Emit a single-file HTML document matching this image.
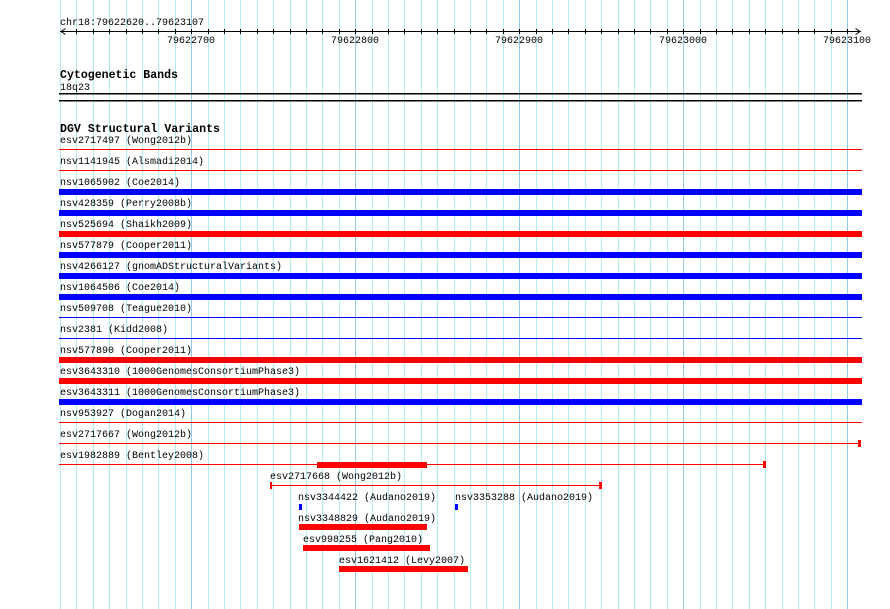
<!DOCTYPE html>
<html><head><meta charset="utf-8"><style>
html,body{margin:0;padding:0;background:#fff;width:890px;height:609px;overflow:hidden}
svg{display:block}
text{font-family:"Liberation Mono",monospace;font-size:10px;fill:#000}
.b{font-weight:bold;font-size:11.5px}
</style></head><body>
<svg width="890" height="609" viewBox="0 0 890 609" shape-rendering="crispEdges">
<g stroke="#b2eef0" stroke-width="1">
<line x1="60.5" y1="0" x2="60.5" y2="609"/><line x1="76.5" y1="0" x2="76.5" y2="609"/><line x1="93.5" y1="0" x2="93.5" y2="609"/><line x1="109.5" y1="0" x2="109.5" y2="609"/><line x1="126.5" y1="0" x2="126.5" y2="609"/><line x1="142.5" y1="0" x2="142.5" y2="609"/><line x1="158.5" y1="0" x2="158.5" y2="609"/><line x1="175.5" y1="0" x2="175.5" y2="609"/>
<line x1="208.5" y1="0" x2="208.5" y2="609"/><line x1="224.5" y1="0" x2="224.5" y2="609"/><line x1="240.5" y1="0" x2="240.5" y2="609"/><line x1="257.5" y1="0" x2="257.5" y2="609"/><line x1="273.5" y1="0" x2="273.5" y2="609"/><line x1="290.5" y1="0" x2="290.5" y2="609"/><line x1="306.5" y1="0" x2="306.5" y2="609"/><line x1="322.5" y1="0" x2="322.5" y2="609"/><line x1="339.5" y1="0" x2="339.5" y2="609"/>
<line x1="372.5" y1="0" x2="372.5" y2="609"/><line x1="388.5" y1="0" x2="388.5" y2="609"/><line x1="404.5" y1="0" x2="404.5" y2="609"/><line x1="421.5" y1="0" x2="421.5" y2="609"/><line x1="437.5" y1="0" x2="437.5" y2="609"/><line x1="454.5" y1="0" x2="454.5" y2="609"/><line x1="470.5" y1="0" x2="470.5" y2="609"/><line x1="486.5" y1="0" x2="486.5" y2="609"/><line x1="503.5" y1="0" x2="503.5" y2="609"/>
<line x1="536.5" y1="0" x2="536.5" y2="609"/><line x1="552.5" y1="0" x2="552.5" y2="609"/><line x1="568.5" y1="0" x2="568.5" y2="609"/><line x1="585.5" y1="0" x2="585.5" y2="609"/><line x1="601.5" y1="0" x2="601.5" y2="609"/><line x1="618.5" y1="0" x2="618.5" y2="609"/><line x1="634.5" y1="0" x2="634.5" y2="609"/><line x1="650.5" y1="0" x2="650.5" y2="609"/><line x1="667.5" y1="0" x2="667.5" y2="609"/>
<line x1="700.5" y1="0" x2="700.5" y2="609"/><line x1="716.5" y1="0" x2="716.5" y2="609"/><line x1="732.5" y1="0" x2="732.5" y2="609"/><line x1="749.5" y1="0" x2="749.5" y2="609"/><line x1="765.5" y1="0" x2="765.5" y2="609"/><line x1="782.5" y1="0" x2="782.5" y2="609"/><line x1="798.5" y1="0" x2="798.5" y2="609"/><line x1="814.5" y1="0" x2="814.5" y2="609"/><line x1="831.5" y1="0" x2="831.5" y2="609"/>
</g>
<g stroke="#92c8e8" stroke-width="1">
<line x1="191.5" y1="0" x2="191.5" y2="609"/><line x1="355.5" y1="0" x2="355.5" y2="609"/><line x1="519.5" y1="0" x2="519.5" y2="609"/><line x1="683.5" y1="0" x2="683.5" y2="609"/><line x1="847.5" y1="0" x2="847.5" y2="609"/>
</g>
<!-- ruler -->
<text x="60" y="25">chr18:79622620..79623107</text>
<g stroke="#000" stroke-width="1">
<line x1="60" y1="31.5" x2="861" y2="31.5"/>
<path d="M65.5 28.5 L61 31.5 L65.5 34.5 M855.5 28.5 L860 31.5 L855.5 34.5" fill="none" shape-rendering="auto"/>
<path d="M76.5 29v5M93.5 29v5M109.5 29v5M126.5 29v5M142.5 29v5M158.5 29v5M175.5 29v5M191.5 29v5M208.5 29v5M224.5 29v5M240.5 29v5M257.5 29v5M273.5 29v5M290.5 29v5M306.5 29v5M322.5 29v5M339.5 29v5M355.5 29v5M372.5 29v5M388.5 29v5M404.5 29v5M421.5 29v5M437.5 29v5M454.5 29v5M470.5 29v5M486.5 29v5M503.5 29v5M519.5 29v5M536.5 29v5M552.5 29v5M568.5 29v5M585.5 29v5M601.5 29v5M618.5 29v5M634.5 29v5M650.5 29v5M667.5 29v5M683.5 29v5M700.5 29v5M716.5 29v5M732.5 29v5M749.5 29v5M765.5 29v5M782.5 29v5M798.5 29v5M814.5 29v5M831.5 29v5M847.5 29v5"/>
</g>
<g text-anchor="middle">
<text x="191" y="43">79622700</text><text x="355" y="43">79622800</text><text x="519" y="43">79622900</text><text x="683" y="43">79623000</text><text x="847" y="43">79623100</text>
</g>
<!-- cytobands -->
<text class="b" x="60" y="78" textLength="118" lengthAdjust="spacingAndGlyphs">Cytogenetic Bands</text>
<text x="60" y="90">18q23</text>
<rect x="59" y="93" width="803" height="1.3" fill="#000"/>
<rect x="59" y="100" width="803" height="1.3" fill="#000"/>
<!-- DGV -->
<text class="b" x="60" y="132" textLength="160" lengthAdjust="spacingAndGlyphs">DGV Structural Variants</text>
<text x="60" y="143">esv2717497 (Wong2012b)</text>
<rect x="59" y="149" width="803" height="1" fill="#f00"/>
<text x="60" y="164">nsv1141945 (Alsmadi2014)</text>
<rect x="59" y="170" width="803" height="1" fill="#f00"/>
<text x="60" y="185">nsv1065902 (Coe2014)</text>
<rect x="59" y="189" width="803" height="6" fill="#00f"/>
<text x="60" y="206">nsv428359 (Perry2008b)</text>
<rect x="59" y="210" width="803" height="6" fill="#00f"/>
<text x="60" y="227">nsv525694 (Shaikh2009)</text>
<rect x="59" y="231" width="803" height="6" fill="#f00"/>
<text x="60" y="248">nsv577879 (Cooper2011)</text>
<rect x="59" y="252" width="803" height="6" fill="#00f"/>
<text x="60" y="269">nsv4266127 (gnomADStructuralVariants)</text>
<rect x="59" y="273" width="803" height="6" fill="#00f"/>
<text x="60" y="290">nsv1064506 (Coe2014)</text>
<rect x="59" y="294" width="803" height="6" fill="#00f"/>
<text x="60" y="311">nsv509708 (Teague2010)</text>
<rect x="59" y="317" width="803" height="1" fill="#00f"/>
<text x="60" y="332">nsv2381 (Kidd2008)</text>
<rect x="59" y="338" width="803" height="1" fill="#00f"/>
<text x="60" y="353">nsv577890 (Cooper2011)</text>
<rect x="59" y="357" width="803" height="6" fill="#f00"/>
<text x="60" y="374">esv3643310 (1000GenomesConsortiumPhase3)</text>
<rect x="59" y="378" width="803" height="6" fill="#f00"/>
<text x="60" y="395">esv3643311 (1000GenomesConsortiumPhase3)</text>
<rect x="59" y="399" width="803" height="6" fill="#00f"/>
<text x="60" y="416">nsv953927 (Dogan2014)</text>
<rect x="59" y="422" width="803" height="1" fill="#f00"/>
<text x="60" y="437">esv2717667 (Wong2012b)</text>
<rect x="59" y="443" width="801" height="1" fill="#f00"/>
<rect x="858" y="440" width="3" height="7" fill="#f00"/>
<text x="60" y="458">esv1982889 (Bentley2008)</text>
<rect x="59" y="464" width="705" height="1" fill="#f00"/>
<rect x="763" y="461" width="3" height="7" fill="#f00"/>
<rect x="317" y="462" width="110" height="6" fill="#f00"/>
<text x="270" y="479">esv2717668 (Wong2012b)</text>
<rect x="270" y="485" width="330" height="1" fill="#f00"/>
<rect x="270" y="482" width="2" height="7" fill="#f00"/>
<rect x="599" y="482" width="3" height="7" fill="#f00"/>
<text x="298" y="500">nsv3344422 (Audano2019)</text>
<rect x="299" y="504" width="3" height="6" fill="#00f"/>
<text x="455" y="500">nsv3353288 (Audano2019)</text>
<rect x="455" y="504" width="3" height="6" fill="#00f"/>
<text x="298" y="521">nsv3348829 (Audano2019)</text>
<rect x="299" y="524" width="128" height="6" fill="#f00"/>
<text x="303" y="542">esv998255 (Pang2010)</text>
<rect x="303" y="545" width="127" height="6" fill="#f00"/>
<text x="339" y="563">esv1621412 (Levy2007)</text>
<rect x="339" y="566" width="129" height="6" fill="#f00"/>
</svg>
</body></html>
